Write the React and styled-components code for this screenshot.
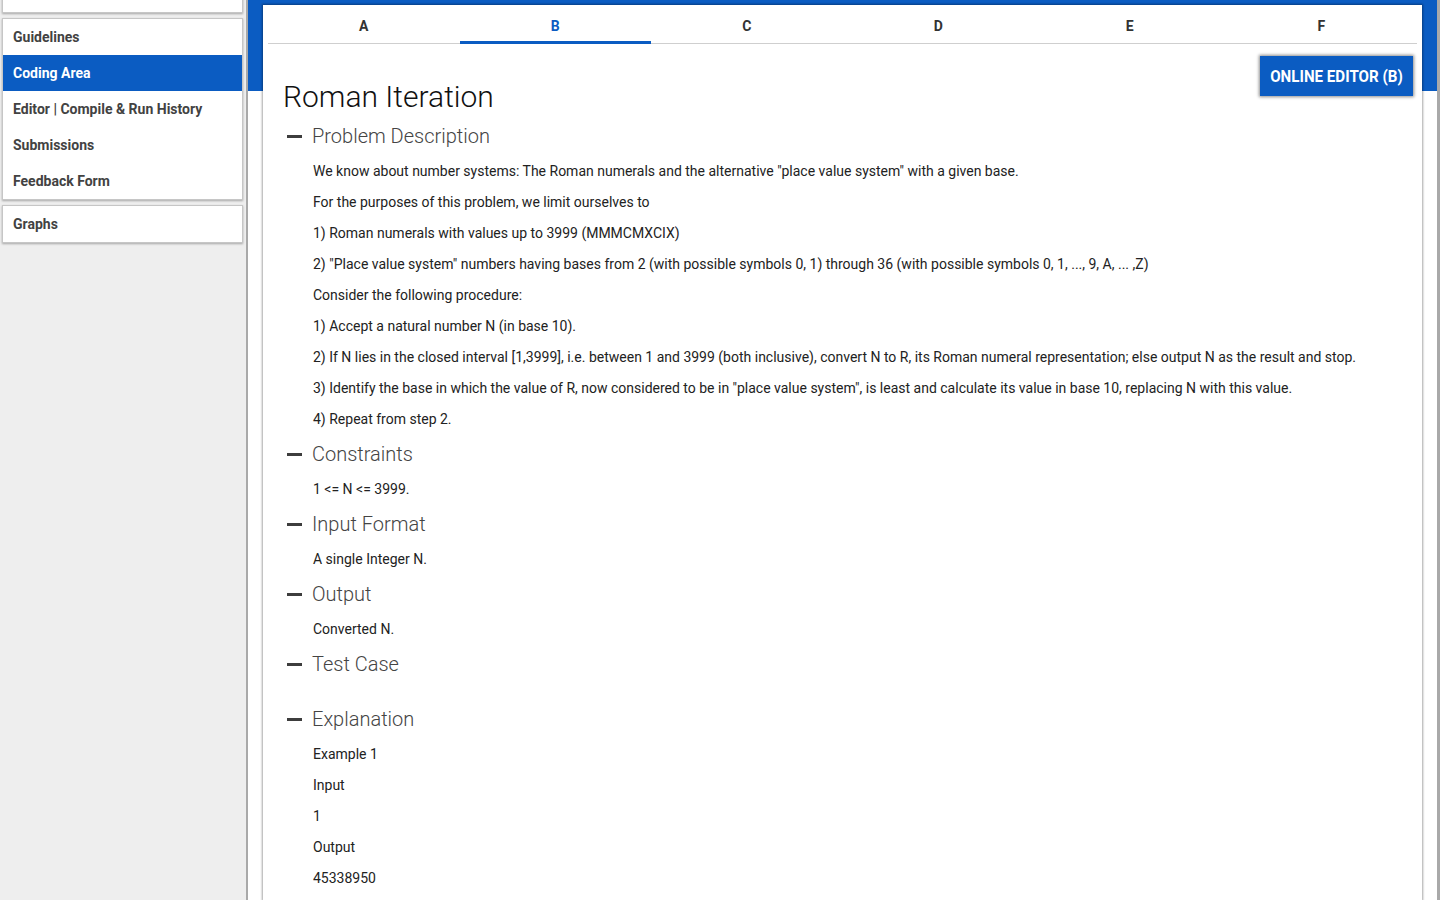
import React, { useState } from 'react'
import styled, { createGlobalStyle } from 'styled-components'

const BLUE = '#0b5cc2'

const GlobalStyle = createGlobalStyle`
  html, body {
    margin: 0;
    padding: 0;
    height: 100%;
    overflow: hidden;
    background: #fff;
    font-family: Roboto, 'Liberation Sans', Arial, sans-serif;
  }
  #root {
    height: 100%;
  }
`

const Page = styled.div`
  display: flex;
  height: 900px;
  overflow: hidden;
`

const Sidebar = styled.aside`
  flex: 0 0 248px;
  background: #eeeeee;
  border-right: 2px solid #a9a9a9;
  padding: 0 4px 0 3px;
  box-sizing: border-box;
  display: flex;
  flex-direction: column;
  gap: 7px;
  overflow: hidden;
`

const NavCard = styled.div`
  background: #fff;
  box-shadow: 0 0 0 1px #c6c6c6, 0 1px 2px 1px rgba(0, 0, 0, 0.3);
  display: flex;
  flex-direction: column;
  margin-top: ${({ $offset }) => $offset || 0}px;
`

const NavItem = styled.a`
  display: flex;
  align-items: center;
  height: 36px;
  padding: 0 10px;
  font-size: 14px;
  font-weight: 700;
  color: ${({ $active }) => ($active ? '#fff' : '#424242')};
  background: ${({ $active }) => ($active ? BLUE : 'transparent')};
  cursor: pointer;
  text-decoration: none;
`

const Main = styled.main`
  flex: 1;
  display: flex;
  flex-direction: column;
  border-right: 3px solid #a9a9a9;
  background: linear-gradient(to bottom, ${BLUE} 0, ${BLUE} 91px, #fff 91px);
  padding: 5px 15px 0 15px;
  overflow: hidden;
`

const Card = styled.section`
  flex: 1;
  background: #fff;
  box-shadow: 0 0 2px 1px rgba(0, 0, 0, 0.35);
  padding: 0 5px 0 5px;
`

const Tabs = styled.nav`
  display: grid;
  grid-template-columns: repeat(6, 1fr);
  border-bottom: 1px solid #cfcfcf;
`

const Tab = styled.button`
  height: 39px;
  border: none;
  background: none;
  font-family: inherit;
  font-size: 14px;
  font-weight: 700;
  color: ${({ $active }) => ($active ? BLUE : '#333')};
  border-bottom: 3px solid ${({ $active }) => ($active ? BLUE : 'transparent')};
  margin-bottom: -1px;
  padding: 5px 0 0;
  cursor: pointer;
`

const Body = styled.div`
  padding: 12px 4px 0 15px;
`

const EditorButton = styled.button`
  float: right;
  width: 153px;
  height: 40px;
  background: ${BLUE};
  color: #fff;
  border: none;
  box-shadow: 0 0 3px 1px rgba(0, 0, 0, 0.45);
  font-family: Roboto, 'Liberation Sans', sans-serif;
  font-size: 17px;
  font-weight: 700;
  cursor: pointer;
  display: flex;
  align-items: center;
  justify-content: center;
  white-space: nowrap;
  overflow: hidden;

  span {
    display: inline-block;
    transform: scaleX(0.89);
  }
`

const Title = styled.h1`
  margin: 0 0 5px;
  padding-top: 21px;
  font-size: 30px;
  line-height: 40px;
  font-weight: 300;
  color: #111;
`

const SectionHeader = styled.h2`
  display: flex;
  align-items: center;
  gap: 10px;
  margin: 0 0 10px;
  font-size: 20px;
  line-height: 29px;
  font-weight: 300;
  color: #444;
  cursor: pointer;
`

const Dash = styled.span`
  display: inline-block;
  width: 15px;
  height: 3px;
  margin-left: 4px;
  background: #3d3d3d;
`

const SectionBody = styled.div`
  padding-left: 30px;
  min-height: ${({ $empty }) => ($empty ? '16px' : 0)};
`

const Para = styled.p`
  margin: 0 0 10px;
  font-size: 14px;
  line-height: 21px;
  color: #222;
`

const tabs = ['A', 'B', 'C', 'D', 'E', 'F']

const sections = [
  {
    title: 'Problem Description',
    lines: [
      'We know about number systems: The Roman numerals and the alternative "place value system" with a given base.',
      'For the purposes of this problem, we limit ourselves to',
      '1) Roman numerals with values up to 3999 (MMMCMXCIX)',
      '2) "Place value system" numbers having bases from 2 (with possible symbols 0, 1) through 36 (with possible symbols 0, 1, ..., 9, A, ... ,Z)',
      'Consider the following procedure:',
      '1) Accept a natural number N (in base 10).',
      '2) If N lies in the closed interval [1,3999], i.e. between 1 and 3999 (both inclusive), convert N to R, its Roman numeral representation; else output N as the result and stop.',
      '3) Identify the base in which the value of R, now considered to be in "place value system", is least and calculate its value in base 10, replacing N with this value.',
      '4) Repeat from step 2.',
    ],
  },
  { title: 'Constraints', lines: ['1 <= N <= 3999.'] },
  { title: 'Input Format', lines: ['A single Integer N.'] },
  { title: 'Output', lines: ['Converted N.'] },
  { title: 'Test Case', lines: [] },
  {
    title: 'Explanation',
    lines: ['Example 1', 'Input', '1', 'Output', '45338950'],
  },
]

const App = () => {
  const [activeTab, setActiveTab] = useState('B')

  return (
    <>
      <GlobalStyle />
      <Page>
        <Sidebar>
          <NavCard $offset={-24}>
            <NavItem>&nbsp;</NavItem>
          </NavCard>
          <NavCard>
            <NavItem>Guidelines</NavItem>
            <NavItem $active>Coding Area</NavItem>
            <NavItem>Editor | Compile &amp; Run History</NavItem>
            <NavItem>Submissions</NavItem>
            <NavItem>Feedback Form</NavItem>
          </NavCard>
          <NavCard>
            <NavItem>Graphs</NavItem>
          </NavCard>
        </Sidebar>

        <Main>
          <Card>
            <Tabs>
              {tabs.map(t => (
                <Tab key={t} $active={t === activeTab} onClick={() => setActiveTab(t)}>
                  {t}
                </Tab>
              ))}
            </Tabs>

            <Body>
              <EditorButton>
                <span>ONLINE EDITOR ({activeTab})</span>
              </EditorButton>
              <Title>Roman Iteration</Title>

              {sections.map(({ title, lines }) => (
                <div key={title}>
                  <SectionHeader>
                    <Dash />
                    {title}
                  </SectionHeader>
                  <SectionBody $empty={!lines.length}>
                    {lines.map((line, key) => (
                      <Para key={key}>{line}</Para>
                    ))}
                  </SectionBody>
                </div>
              ))}
            </Body>
          </Card>
        </Main>
      </Page>
    </>
  )
}

export default App
